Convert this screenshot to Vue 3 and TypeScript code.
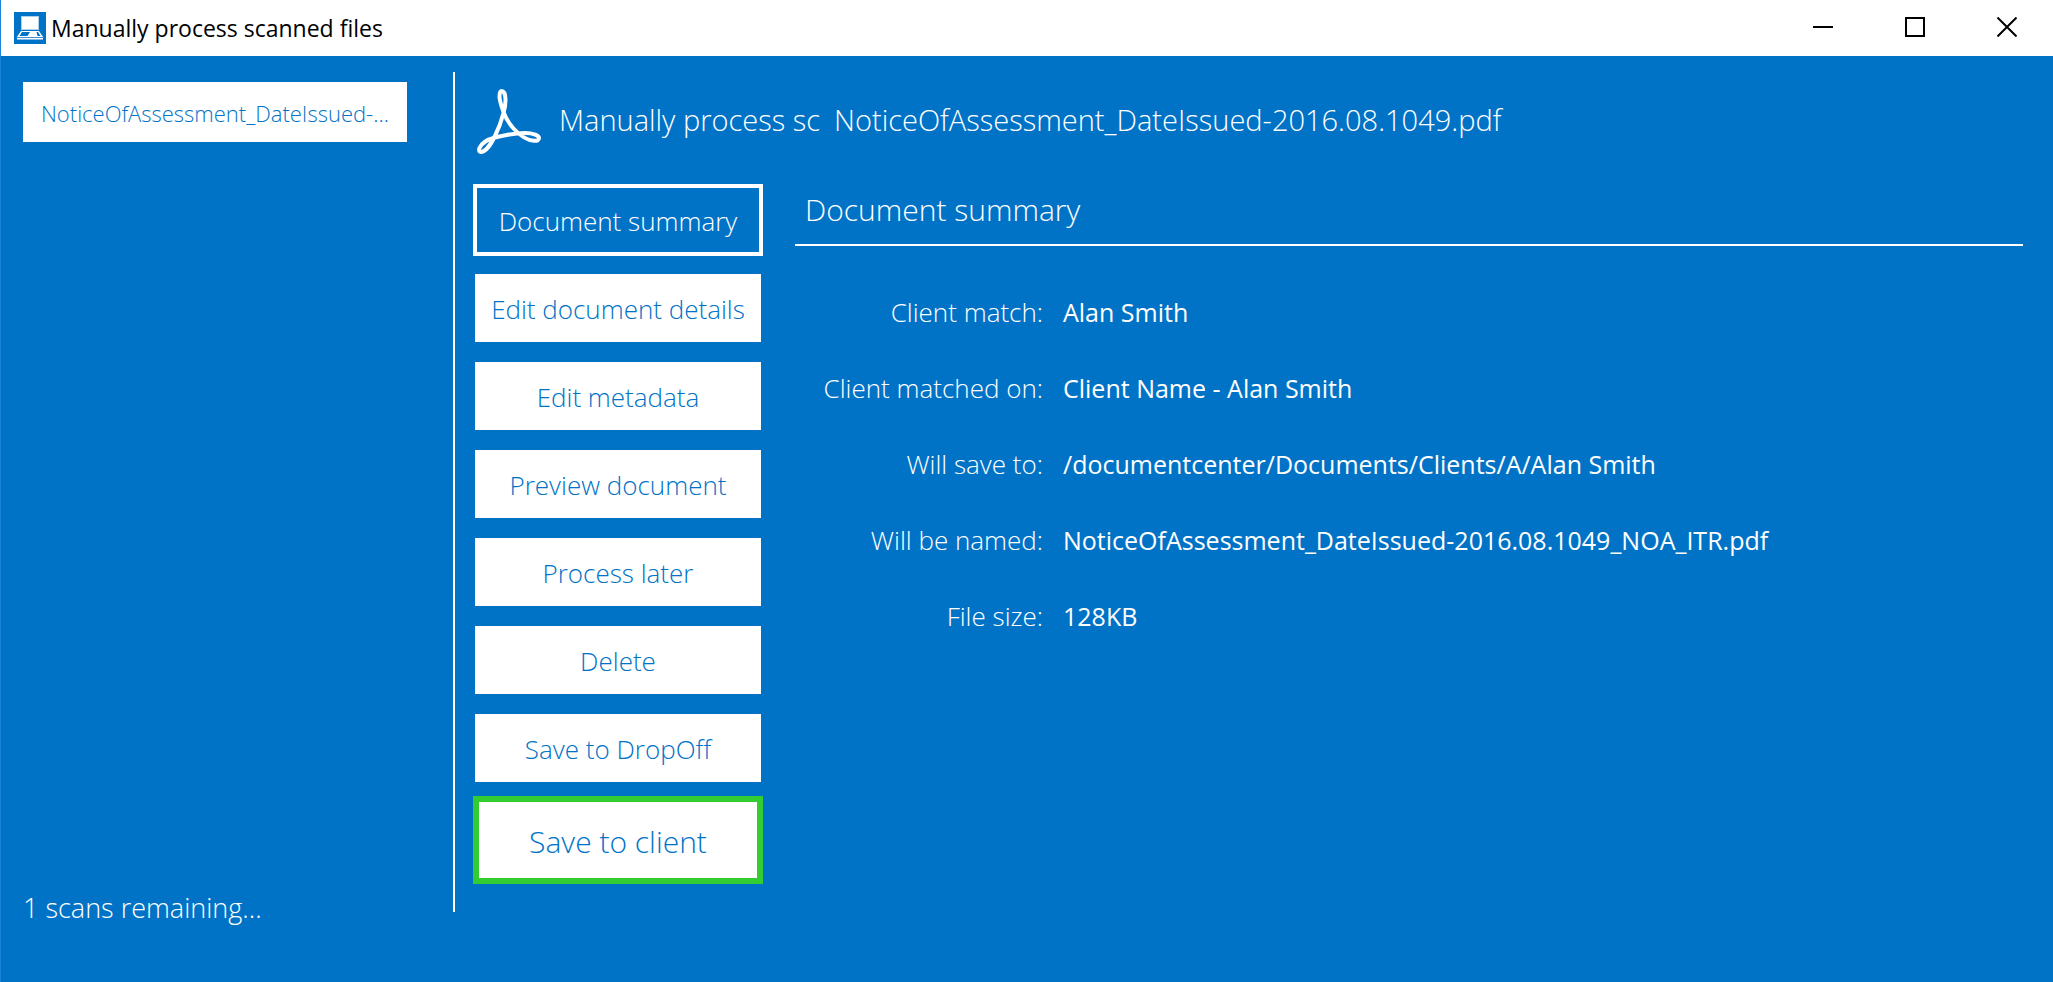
<script setup lang="ts">
import { ref } from 'vue'

interface Action {
  id: string
  label: string
}

interface Detail {
  label: string
  value: string
}

const windowTitle = 'Manually process scanned files'
const fileName = 'NoticeOfAssessment_DateIssued-2016.08.1049.pdf'
const scans: string[] = [fileName]

const actions: Action[] = [
  { id: 'summary', label: 'Document summary' },
  { id: 'details', label: 'Edit document details' },
  { id: 'metadata', label: 'Edit metadata' },
  { id: 'preview', label: 'Preview document' },
  { id: 'later', label: 'Process later' },
  { id: 'delete', label: 'Delete' },
  { id: 'dropoff', label: 'Save to DropOff' },
]
const selected = ref('summary')

const details: Detail[] = [
  { label: 'Client match:', value: 'Alan Smith' },
  { label: 'Client matched on:', value: 'Client Name - Alan Smith' },
  { label: 'Will save to:', value: '/documentcenter/Documents/Clients/A/Alan Smith' },
  { label: 'Will be named:', value: 'NoticeOfAssessment_DateIssued-2016.08.1049_NOA_ITR.pdf' },
  { label: 'File size:', value: '128KB' },
]
</script>

<template>
  <div class="window">
    <header class="titlebar">
      <svg class="app-icon" viewBox="0 0 32 32" aria-hidden="true">
        <rect width="32" height="32" fill="#0173c7" />
        <rect x="7.5" y="4.5" width="17" height="13" fill="#fff" stroke="#a9d2f0" />
        <path d="M7 19h18l4.500 6.500h-27z" fill="#fff" />
        <path d="M8 20h8l-2.500 4h-8z" fill="#0173c7" />
        <path d="M22.500 20h1.500l2.500 4h-3z" fill="#0173c7" />
        <path d="M3 25.500h26v2h-26z" fill="#fff" />
        <path d="M3 25.500h26" stroke="#0173c7" stroke-width=".7" />
      </svg>
      <span class="title">{{ windowTitle }}</span>
      <div class="controls">
        <button type="button" class="control" aria-label="Minimize">
          <svg viewBox="0 0 20 20"><path d="M0 10h20" /></svg>
        </button>
        <button type="button" class="control" aria-label="Maximize">
          <svg viewBox="0 0 20 20"><rect x="1" y="1" width="18" height="18" /></svg>
        </button>
        <button type="button" class="control" aria-label="Close">
          <svg viewBox="0 0 20 20"><path d="M.5 .5l19 19M19.500 .5l-19 19" /></svg>
        </button>
      </div>
    </header>

    <div class="body">
      <aside class="sidebar">
        <button v-for="scan in scans" :key="scan" type="button" class="scan">
          {{ scan.slice(0, 30) }}...
        </button>
        <p class="status">{{ scans.length }} scans remaining...</p>
      </aside>

      <main class="main">
        <div class="doc-header">
          <svg class="pdf-icon" viewBox="0 0 64 66" aria-hidden="true">
            <path
              d="M26.500 24C24 17 22.500 12 22.500 8.500C22.500 5 23.200 3 24.500 3C27 3 28.500 7 28.500 12C28.500 17 28 20 26.500 25C24 35 20.500 43 17.500 49C13 58 7.500 64 4 64C2 64 1.800 62 2.500 60C4.500 55 10.500 51.500 18 49.500C28 47 38 45 48 45C56.500 45 62 47.500 62 50C62 52.300 60 53 57 52.800C49 52.300 42 46.500 36.500 40.500C31.500 35 28.500 29.500 26.500 24Z"
            />
          </svg>
          <span>Manually process sc</span>
          <span>{{ fileName }}</span>
        </div>

        <div class="columns">
          <nav class="actions" aria-label="Document actions">
            <button
              v-for="action in actions"
              :key="action.id"
              type="button"
              class="action"
              :class="{ selected: action.id === selected }"
              @click="selected = action.id"
            >
              {{ action.label }}
            </button>
            <button type="button" class="action primary">Save to client</button>
          </nav>

          <section class="summary">
            <h1>Document summary</h1>
            <dl>
              <template v-for="detail in details" :key="detail.label">
                <dt>{{ detail.label }}</dt>
                <dd>{{ detail.value }}</dd>
              </template>
            </dl>
          </section>
        </div>
      </main>
    </div>
  </div>
</template>

<style>
body {
  background: #0173c7;
}
</style>

<style scoped>
.window {
  box-sizing: border-box;
  display: flex;
  flex-direction: column;
  min-height: 100vh;
  border-left: 1px solid #1883d7;
  background: #0173c7;
  color: #fff;
  font-family: "Open Sans", "Noto Sans", sans-serif;
  font-weight: 300;
}

button {
  margin: 0;
  border: 0;
  border-radius: 0;
  font: inherit;
  cursor: pointer;
}

.titlebar {
  display: flex;
  align-items: center;
  height: 56px;
  padding-left: 13px;
  background: #fff;
  color: #000;
}

.app-icon {
  width: 32px;
  height: 32px;
  margin-right: 5px;
}

.title {
  font-size: 23px;
  font-weight: 400;
}

.controls {
  display: flex;
  align-self: flex-start;
  margin-left: auto;
}

.control {
  display: flex;
  align-items: center;
  justify-content: center;
  width: 92px;
  height: 54px;
  padding: 0;
  background: none;
}

.control svg {
  width: 20px;
  height: 20px;
  fill: none;
  stroke: #000;
  stroke-width: 2;
}

.body {
  display: flex;
  flex: 1;
  padding: 16px 30px 70px 22px;
}

.sidebar {
  display: flex;
  flex-direction: column;
  width: 430px;
  border-right: 2px solid #fff;
}

.scan {
  width: 384px;
  height: 60px;
  margin-top: 10px;
  padding: 2px 18px 0;
  background: #fff;
  color: #0173c7;
  font-size: 22px;
  text-align: left;
  white-space: nowrap;
}

.status {
  margin: auto 0 -10px;
  font-size: 27px;
  line-height: 28px;
}

.main {
  flex: 1;
  min-width: 0;
  padding-left: 18px;
}

.doc-header {
  display: flex;
  align-items: center;
  gap: 14px;
  height: 94px;
  font-size: 29px;
}

.pdf-icon {
  width: 64px;
  height: 66px;
  margin: 4px 4px 0;
  fill: none;
  stroke: #fff;
  stroke-width: 4;
  stroke-linejoin: round;
}

.columns {
  display: flex;
  gap: 32px;
  margin-top: 18px;
}

.actions {
  display: flex;
  flex-direction: column;
  align-items: center;
  gap: 20px;
  width: 290px;
}

.action {
  width: 286px;
  height: 68px;
  padding: 2px 0 0;
  background: #fff;
  color: #0173c7;
  font-size: 26px;
  white-space: nowrap;
}

.action.selected {
  width: 290px;
  height: 72px;
  margin: 0 0 -2px;
  border: 4px solid #fff;
  background: #0173c7;
  color: #fff;
}

.action.primary {
  width: 290px;
  height: 88px;
  margin-top: -6px;
  border: 6px solid #33cc33;
  font-size: 30px;
}

.summary {
  flex: 1;
  min-width: 0;
}

h1 {
  margin: 0;
  padding: 6px 10px 14px;
  border-bottom: 2px solid #fff;
  font-size: 30px;
  font-weight: 300;
  line-height: 40px;
}

dl {
  display: grid;
  grid-template-columns: 248px 1fr;
  gap: 36px 20px;
  margin: 46px 0 0;
  font-size: 26px;
  line-height: 40px;
}

dt {
  text-align: right;
}

dd {
  margin: 0;
  font-size: 25px;
  font-weight: 500;
}
</style>
